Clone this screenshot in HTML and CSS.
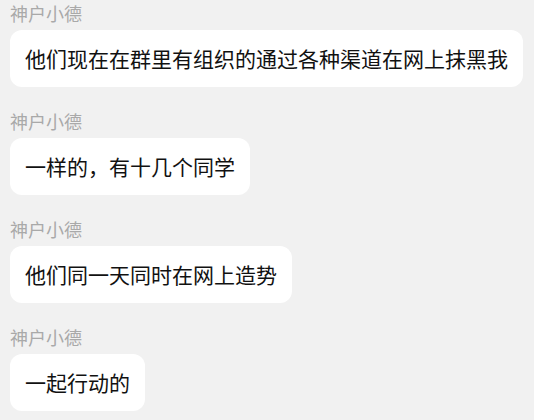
FILE: index.html
```html
<!DOCTYPE html>
<html lang="zh-CN">
<head>
  <meta charset="UTF-8" />
  <meta name="viewport" content="width=device-width, initial-scale=1.0" />
  <title>聊天记录</title>
  <link rel="stylesheet" href="styles.css">
</head>
<body>

  <div class="chat">
    <div class="msg">
      <div class="nombre">神户小德</div>
      <div class="burbuja">他们现在在群里有组织的通过各种渠道在网上抹黑我</div>
    </div>

    <div class="msg">
      <div class="nombre">神户小德</div>
      <div class="burbuja">一样的，有十几个同学</div>
    </div>

    <div class="msg">
      <div class="nombre">神户小德</div>
      <div class="burbuja">他们同一天同时在网上造势</div>
    </div>

    <div class="msg">
      <div class="nombre">神户小德</div>
      <div class="burbuja">一起行动的</div>
    </div>
  </div>

</body>
</html>
```

FILE: styles.css
```css
* {
  box-sizing: border-box;
  margin: 0;
  padding: 0;
}

body {
  font-family: 'Noto Sans CJK SC', 'Noto Sans', sans-serif;
  background: #f1f1f1;
  color: #111;
}

.chat {
  padding: 1px 10px 0;
  display: flex;
  flex-direction: column;
  align-items: flex-start;
  gap: 22px;
}

.msg {
  display: flex;
  flex-direction: column;
  align-items: flex-start;
  gap: 5px;
}

.nombre {
  font-size: 18px;
  line-height: 24px;
  color: #a9a9a9;
}

.burbuja {
  background: #fff;
  font-size: 21px;
  line-height: 29px;
  padding: 14px 15px;
  border-radius: 12px;
}
```
